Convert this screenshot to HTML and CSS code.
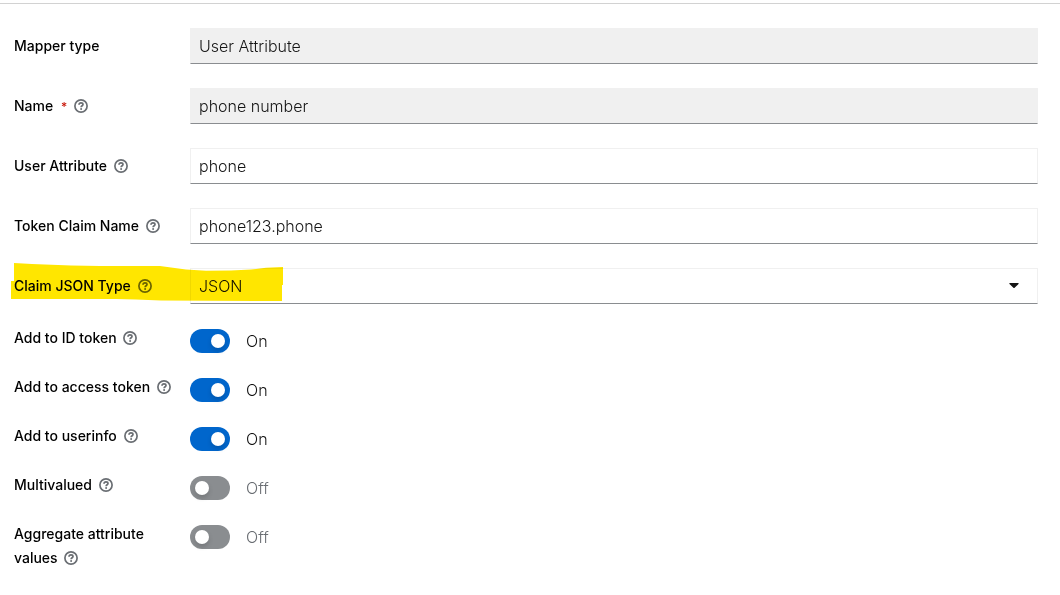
FILE: index.html
```html
<!DOCTYPE html>
<html lang="en">
<head>
    <meta charset="UTF-8">
    <meta name="viewport" content="width=device-width, initial-scale=1.0">
    <title>Mapper details</title>
    <link rel="stylesheet" href="styles.css">
</head>
<body>
    <!-- Shared help icon -->
    <svg class="sprite" aria-hidden="true">
        <symbol id="help" viewBox="0 0 14 14">
            <circle cx="7" cy="7" r="6.1" fill="none" stroke="currentColor" stroke-width="1.7"/>
            <path d="M5 5.7C5.1 4.4 5.9 3.9 7 3.9C8.2 3.9 9 4.5 9 5.5C9 6.7 7.1 6.8 7.1 8.2" fill="none" stroke="currentColor" stroke-width="1.7"/>
            <circle cx="7.1" cy="10" r="1" fill="currentColor"/>
        </symbol>
    </svg>

    <main>
        <form class="form">
            <!-- Text fields -->
            <div class="fields">
                <div class="row">
                    <div class="label"><label for="mapperType">Mapper type</label></div>
                    <input class="control" type="text" id="mapperType" value="User Attribute" readonly>
                </div>
                <div class="row">
                    <div class="label"><label for="name">Name <span class="required">*</span></label> <button type="button" class="help" aria-label="Help for name"><svg><use href="#help"/></svg></button></div>
                    <input class="control" type="text" id="name" value="phone number" readonly>
                </div>
                <div class="row">
                    <div class="label"><label for="userAttribute">User Attribute</label> <button type="button" class="help" aria-label="Help for user attribute"><svg><use href="#help"/></svg></button></div>
                    <input class="control" type="text" id="userAttribute" value="phone">
                </div>
                <div class="row">
                    <div class="label"><label for="claimName">Token Claim Name</label> <button type="button" class="help" aria-label="Help for token claim name"><svg><use href="#help"/></svg></button></div>
                    <input class="control" type="text" id="claimName" value="phone123.phone">
                </div>
                <div class="row marked">
                    <div class="label"><label for="jsonType">Claim JSON Type</label> <button type="button" class="help" aria-label="Help for claim JSON type"><svg><use href="#help"/></svg></button></div>
                    <div class="select">
                        <select class="control" id="jsonType">
                            <option>JSON</option>
                        </select>
                        <svg class="caret" viewBox="0 0 10 6" aria-hidden="true"><path d="M0.8 0H9.2Q10 0.3 9.5 1L5.6 4.8Q5 5.4 4.4 4.8L0.5 1Q0 0.3 0.8 0Z"/></svg>
                    </div>
                    <!-- Highlighter stroke -->
                    <svg class="marker" viewBox="0 0 272 38" aria-hidden="true">
                        <path d="M3 0L21 1L60 2.4L89 3H149L160 4.5L175 6.5L195 7.8L220 7.5L240 6.5L255 4.8L272 4V22H271V38L150 37.5L125 36.4L105 36H0V18H3Z"/>
                    </svg>
                </div>
            </div>

            <!-- Switches -->
            <div class="switches">
                <div class="row">
                    <div class="label"><label for="idToken">Add to ID token</label> <button type="button" class="help" aria-label="Help for ID token"><svg><use href="#help"/></svg></button></div>
                    <div class="switch"><input type="checkbox" id="idToken" checked><span class="on">On</span><span class="off">Off</span></div>
                </div>
                <div class="row">
                    <div class="label"><label for="accessToken">Add to access token</label> <button type="button" class="help" aria-label="Help for access token"><svg><use href="#help"/></svg></button></div>
                    <div class="switch"><input type="checkbox" id="accessToken" checked><span class="on">On</span><span class="off">Off</span></div>
                </div>
                <div class="row">
                    <div class="label"><label for="userinfo">Add to userinfo</label> <button type="button" class="help" aria-label="Help for userinfo"><svg><use href="#help"/></svg></button></div>
                    <div class="switch"><input type="checkbox" id="userinfo" checked><span class="on">On</span><span class="off">Off</span></div>
                </div>
                <div class="row">
                    <div class="label"><label for="multivalued">Multivalued</label> <button type="button" class="help" aria-label="Help for multivalued"><svg><use href="#help"/></svg></button></div>
                    <div class="switch"><input type="checkbox" id="multivalued"><span class="on">On</span><span class="off">Off</span></div>
                </div>
                <div class="row">
                    <div class="label"><label for="aggregate">Aggregate attribute values</label> <button type="button" class="help" aria-label="Help for aggregate attribute values"><svg><use href="#help"/></svg></button></div>
                    <div class="switch"><input type="checkbox" id="aggregate"><span class="on">On</span><span class="off">Off</span></div>
                </div>
            </div>
        </form>
    </main>
</body>
</html>
```
FILE: styles.css
```css
body {
    font-family: Inter, 'Open Sans', sans-serif;
    margin: 0;
    padding-top: 3px;
    background-color: #fff;
    color: #151515;
}

.sprite {
    display: none;
}

main {
    border-top: 1px solid #d2d2d2;
    padding: 24px 22px 24px 14px;
}

/* Form layout */
.fields {
    display: grid;
    gap: 24px;
}

.switches {
    display: grid;
    gap: 22px;
    margin-top: 22px;
}

.row {
    display: grid;
    grid-template-columns: 160px 1fr;
    column-gap: 16px;
    align-items: start;
}

.label {
    color: #000;
    font-size: 14px;
    font-weight: 500;
    line-height: 24px;
}

.fields .label {
    padding-top: 6px;
}

.required {
    color: #c9190b;
    font-size: 12px;
    margin-left: 4px;
}

.help {
    border: none;
    background: none;
    padding: 0;
    margin-left: 3px;
    width: 14px;
    height: 14px;
    color: #6a6e73;
    vertical-align: -2px;
    cursor: pointer;
}

.help svg {
    display: block;
    width: 14px;
    height: 14px;
}

/* Inputs */
.control {
    width: 100%;
    height: 36px;
    box-sizing: border-box;
    padding: 0 8px;
    border: 1px solid #f0f0f0;
    border-bottom-color: #8a8d90;
    border-radius: 0;
    background-color: #fff;
    color: #151515;
    font-family: inherit;
    font-size: 16px;
    font-weight: 300;
}

.control:read-only:not(select) {
    background-color: #f0f0f0;
}

.select {
    position: relative;
}

.select select {
    display: block;
    appearance: none;
}

.caret {
    position: absolute;
    right: 19px;
    top: 15px;
    width: 10px;
    height: 6px;
    fill: #151515;
    pointer-events: none;
}

/* Highlighter */
.marked {
    position: relative;
}

.marker {
    position: absolute;
    left: -3px;
    top: -5px;
    width: 272px;
    height: 38px;
    fill: #ffe600;
    mix-blend-mode: multiply;
    pointer-events: none;
}

/* Switches */
.switch {
    display: flex;
    align-items: center;
    gap: 16px;
    padding-top: 3px;
    font-size: 16px;
    font-weight: 300;
    line-height: 24px;
}

.switch input {
    appearance: none;
    margin: 0;
    width: 40px;
    height: 24px;
    border-radius: 12px;
    background-color: #8a8d90;
    cursor: pointer;
}

.switch input::before {
    content: "";
    display: block;
    width: 14px;
    height: 14px;
    margin: 5px;
    border-radius: 50%;
    background-color: #fff;
    box-shadow: 0 3px 5px rgba(0, 0, 0, 0.15);
}

.switch input:checked {
    background-color: #06c;
}

.switch input:checked::before {
    margin-left: 21px;
}

.off {
    color: #6a6e73;
}

.switch input:checked ~ .off,
.switch input:not(:checked) ~ .on {
    display: none;
}
```
